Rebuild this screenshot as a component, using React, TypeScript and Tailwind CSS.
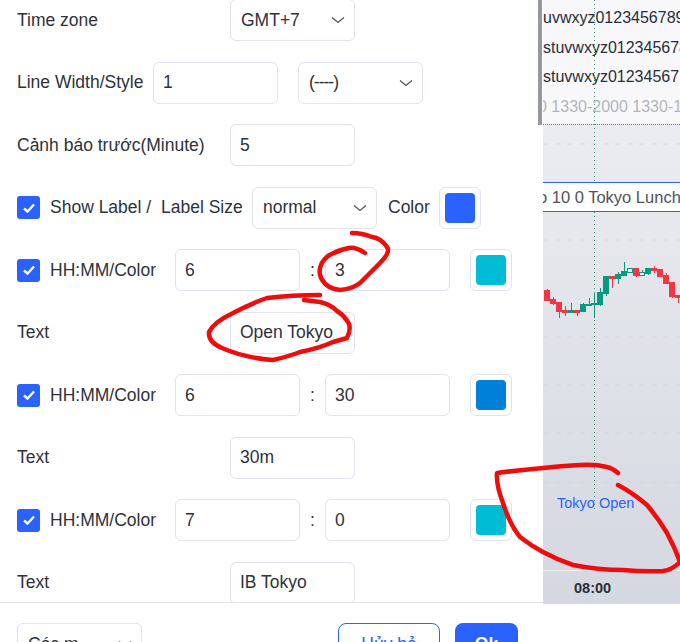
import React from 'react';

const fontStack = { fontFamily: '"Liberation Sans", Arial, sans-serif' };

// x, wick top, wick bottom, body top, body bottom
type Candle = { x: number; wt: number; wb: number; bt: number; bb: number; up: boolean; hollow?: boolean };

const candles: Candle[] = [
  { x: 547, wt: 289, wb: 300, bt: 290, bb: 300, up: false },
  { x: 553, wt: 297, wb: 305, bt: 299, bb: 303, up: false },
  { x: 559, wt: 302, wb: 318, bt: 302, bb: 311, up: false },
  { x: 565, wt: 306, wb: 316, bt: 310, bb: 312, up: false },
  { x: 571, wt: 303, wb: 312, bt: 310, bb: 312, up: true },
  { x: 577, wt: 310, wb: 316, bt: 310, bb: 312, up: false },
  { x: 583, wt: 303, wb: 311, bt: 304, bb: 311, up: true },
  { x: 589, wt: 298, wb: 305, bt: 304, bb: 305, up: true },
  { x: 594, wt: 293, wb: 318, bt: 303, bb: 304, up: true },
  { x: 600, wt: 288, wb: 306, bt: 292, bb: 304, up: true },
  { x: 606, wt: 276, wb: 296, bt: 276, bb: 293, up: true },
  { x: 612, wt: 276, wb: 288, bt: 276, bb: 278, up: false },
  { x: 618, wt: 272, wb: 284, bt: 274, bb: 278, up: true },
  { x: 624, wt: 262, wb: 275, bt: 271, bb: 275, up: true },
  { x: 630, wt: 268, wb: 272, bt: 268, bb: 272, up: true, hollow: true },
  { x: 636, wt: 268, wb: 277, bt: 268, bb: 275, up: false },
  { x: 642, wt: 270, wb: 275, bt: 272, bb: 275, up: true, hollow: true },
  { x: 648, wt: 268, wb: 275, bt: 268, bb: 273, up: true },
  { x: 654, wt: 266, wb: 273, bt: 268, bb: 270, up: false },
  { x: 660, wt: 269, wb: 276, bt: 269, bb: 276, up: false },
  { x: 666, wt: 273, wb: 283, bt: 275, bb: 283, up: false },
  { x: 672, wt: 282, wb: 298, bt: 282, bb: 296, up: false },
  { x: 678, wt: 295, wb: 303, bt: 295, bb: 297, up: false },
];

const Field: React.FC<{ value: string; className?: string }> = ({ value, className = 'w-[125px]' }) => (
  <div className={`${className} h-[42px] flex items-center pl-[9px] border border-[#e0e3eb] rounded-[6px] bg-white shrink-0`}>
    {value}
  </div>
);

const Select: React.FC<{ value: string; valueClass?: string }> = ({ value, valueClass = '' }) => (
  <div className="w-[125px] h-[42px] flex items-center justify-between pl-[10px] pr-[9px] border border-[#e0e3eb] rounded-[6px] bg-white shrink-0">
    <span className={valueClass}>{value}</span>
    <svg width="14" height="8" viewBox="0 0 14 8" fill="none" stroke="#50535e" strokeWidth="1.3">
      <path d="M1 1.5l6 5 6-5" />
    </svg>
  </div>
);

const Check: React.FC = () => (
  <div className="w-[23px] h-[23px] rounded-[3px] bg-[#2962ff] flex items-center justify-center shrink-0">
    <svg width="14" height="12" viewBox="0 0 14 12" fill="none" stroke="white" strokeWidth="2.4">
      <path d="M2 6.5l3.5 3 6.5-7" />
    </svg>
  </div>
);

const Swatch: React.FC<{ color: string }> = ({ color }) => (
  <div className="w-[42px] h-[42px] p-[5px] border border-[#e0e3eb] rounded-[6px] bg-white shrink-0">
    <div className="w-full h-full rounded-[4px]" style={{ backgroundColor: color }} />
  </div>
);

const TimeRow: React.FC<{ h: string; m: string; color: string }> = ({ h, m, color }) => (
  <div className="flex items-center h-[42px]">
    <Check />
    <span className="ml-[10px] w-[125px]">HH:MM/Color</span>
    <Field value={h} />
    <span className="w-[25px] text-center">:</span>
    <Field value={m} />
    <div className="ml-[20px]">
      <Swatch color={color} />
    </div>
  </div>
);

const TextRow: React.FC<{ value: string }> = ({ value }) => (
  <div className="flex items-center h-[42px]">
    <span className="w-[213px]">Text</span>
    <Field value={value} />
  </div>
);

const SettingsDialog: React.FC = () => (
  <div className="relative w-[543px] h-full flex flex-col bg-white shrink-0">
    <div className="h-[602px] overflow-hidden pl-[17px]">
      <div className="-mt-[1px] flex flex-col gap-[20.5px]">
        <div className="flex items-center h-[42px]">
          <span className="w-[213px]">Time zone</span>
          <Select value="GMT+7" />
        </div>
        <div className="flex items-center h-[42px]">
          <span className="w-[136px]">Line Width/Style</span>
          <Field value="1" />
          <div className="ml-[20px]">
            <Select value="(----)" valueClass="tracking-[-1px]" />
          </div>
        </div>
        <div className="flex items-center h-[42px]">
          <span className="w-[213px]">Cảnh báo trước(Minute)</span>
          <Field value="5" />
        </div>
        <div className="flex items-center h-[42px]">
          <Check />
          <span className="ml-[10px] w-[111px]">Show Label /</span>
          <span className="w-[91px]">Label Size</span>
          <Select value="normal" />
          <span className="ml-[11px] w-[51px]">Color</span>
          <Swatch color="#2962ff" />
        </div>
        <TimeRow h="6" m="3" color="#00bcd4" />
        <TextRow value="Open Tokyo" />
        <TimeRow h="6" m="30" color="#0080d8" />
        <TextRow value="30m" />
        <TimeRow h="7" m="0" color="#00bcd4" />
        <TextRow value="IB Tokyo" />
      </div>
    </div>
    <div className="flex-1 border-t border-[#e0e3eb] pt-[20px] pl-[17px] pr-[25px] flex items-start justify-between overflow-hidden">
      <Select value="Các m" />
      <div className="flex gap-[15px]">
        <div className="w-[102px] h-[42px] border border-[#2962ff] text-[#2962ff] rounded-[8px] flex items-center justify-center">Hủy bỏ</div>
        <div className="w-[63px] h-[42px] bg-[#2962ff] text-white font-bold rounded-[8px] flex items-center justify-center">Ok</div>
      </div>
    </div>
    {/* scrollbar thumb */}
    <div className="absolute right-[1px] top-0 w-[4px] h-[125px] bg-[#9598a1]" />
  </div>
);

const ChartPane: React.FC = () => (
  <div className="flex-1 h-full bg-white overflow-hidden">
    <div className="relative h-[604px] flex flex-col overflow-hidden bg-gradient-to-b from-[#f1f2f5] to-[#d5d7e1]">
      <div className="h-[125px] pt-[8px] bg-[#f8f8fa] border-b border-dotted border-[#f23645] text-[#2a2e39] whitespace-nowrap flex flex-col gap-[9.5px] leading-[20px] text-[16px]">
        <div>uvwxyz0123456789</div>
        <div>stuvwxyz012345678</div>
        <div>stuvwxyz01234567</div>
        <div className="-ml-[5px] text-[#b2b5be]">0 1330-2000 1330-1</div>
      </div>
      {/* lunch label bar */}
      <div className="mt-[57px] h-[30px] bg-white border-y border-[#2962ff] text-[16.5px] text-[#50535e] whitespace-nowrap flex items-center -ml-[5px]">
        o 10 0 Tokyo Lunch
      </div>
      <svg className="absolute inset-0" width="137" height="604" viewBox="543 0 137 604">
        {[144, 240, 337, 385, 433, 482, 530].map(y => (
          <line key={y} x1="543" x2="680" y1={y} y2={y} stroke="#d1d4dc" strokeOpacity="0.6" strokeDasharray="6 6" />
        ))}
        <line x1="594.5" x2="594.5" y1="0" y2="182" stroke="#4c9a78" strokeDasharray="1 3" />
        <line x1="594.5" x2="594.5" y1="212" y2="512" stroke="#4c9a78" strokeDasharray="1 3" />
        {candles.map(c => {
          const col = c.up ? '#089981' : '#f23645';
          return (
            <g key={c.x}>
              <line x1={c.x + 0.5} x2={c.x + 0.5} y1={c.wt} y2={c.wb} stroke={col} />
              <rect
                x={c.x - 2.5}
                y={c.bt + 0.5}
                width="5"
                height={c.bb - c.bt}
                fill={c.hollow ? '#eceef2' : col}
                stroke={col}
              />
            </g>
          );
        })}
        <line x1="543" x2="680" y1="570.5" y2="570.5" stroke="#eceef2" />
      </svg>
      <span className="absolute left-[14px] top-[493px] text-[14.5px] text-[#2962ff] whitespace-nowrap">Tokyo Open</span>
      <span className="absolute left-[31px] top-[578px] text-[14.5px] font-bold text-[#2a2e39]">08:00</span>
    </div>
  </div>
);

const App: React.FC = () => (
  <div className="relative w-[680px] h-[642px] overflow-hidden flex bg-white text-[17.5px] text-[#2f323a]" style={fontStack}>
    <SettingsDialog />
    <ChartPane />
    {/* hand-drawn red marks on top of the screenshot */}
    <svg className="absolute inset-0 pointer-events-none" width="680" height="642" viewBox="0 0 680 642" fill="none" stroke="#ee0d0d" strokeWidth="4.5" strokeLinecap="round" strokeLinejoin="round">
      <path d="M365 253 Q356 247 349 248 Q338 250 328 256 Q318 264 320 275 Q324 288 340 290 Q352 289 360 283 L380 263 Q391 252 387 247 Q381 238 372 237 Q362 233 352 233" />
      <path d="M320 295 Q292 295 267 298 Q250 304 233 313 Q214 322 209 332 Q208 342 222 348 Q245 358 273 360 Q290 356 300 352 Q320 348 333 342 L347 338 Q351 330 349 324 Q345 316 337 311 Q330 304 320 302 L304 300" />
      <path d="M618 473 Q612 468 607 467 Q595 464 580 465 Q560 466 543 468 Q520 470 497 473 Q496 485 503 503 Q510 525 520 537 Q530 545 543 552 Q558 560 573 565 Q598 570 623 570 Q645 572 663 571 Q672 570 680 562 Q675 548 667 533 Q658 518 647 505 Q633 493 618 485" />
    </svg>
  </div>
);

export default App;
